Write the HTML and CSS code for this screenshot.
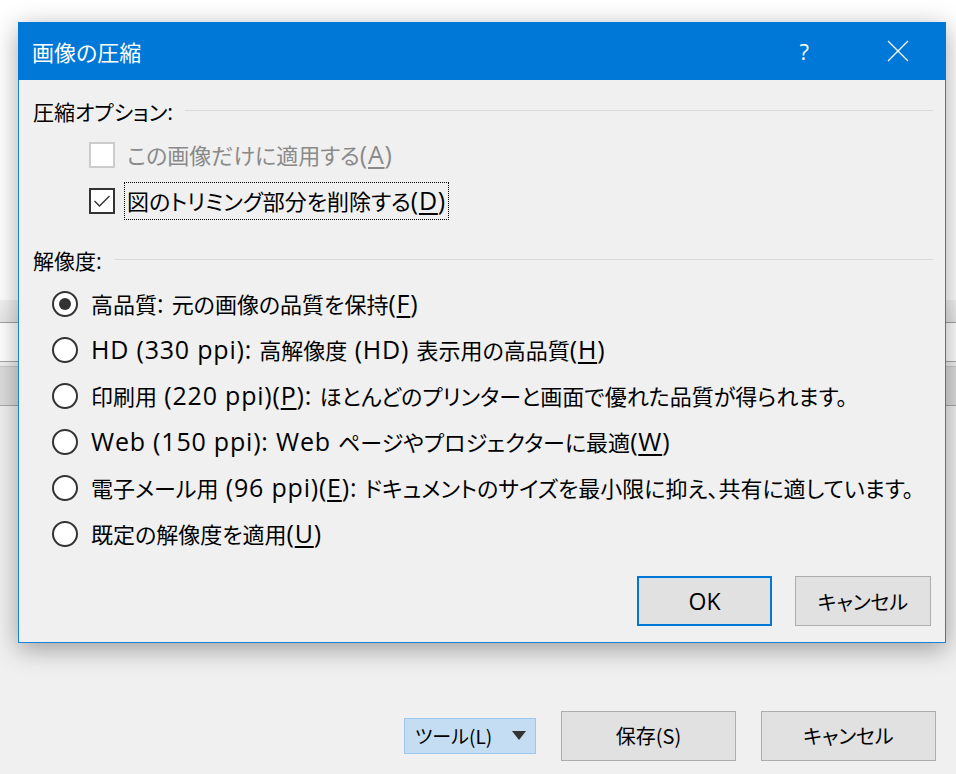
FILE: index.html
```html
<!DOCTYPE html>
<html lang="ja">

<head>
    <meta charset="UTF-8">
    <meta name="viewport" content="width=device-width, initial-scale=1.0">
    <title>画像の圧縮</title>
    <link rel="stylesheet" href="styles.css">
</head>

<body>
    <div class="screen">
        <!-- the save dialog behind -->
        <div class="behind">
            <div class="behind_top"></div>
            <div class="behind_band"></div>
            <div class="behind_field"></div>
            <div class="behind_gap"></div>
            <div class="behind_bar"></div>
            <div class="behind_bottom">
                <div class="tools_btn">ツール(L) <span class="tri"></span></div>
                <button class="win_btn wide">保存(S)</button>
                <button class="win_btn wide">キャンセル</button>
            </div>
        </div>

        <div class="dialog">
            <div class="title_bar">
                <span class="title">画像の圧縮</span>
                <span class="help">?</span>
                <svg class="close" width="22" height="22" viewBox="0 0 22 22">
                    <path d="M1 1 L21 21 M21 1 L1 21" stroke="#fff" stroke-width="1.3" fill="none" />
                </svg>
            </div>
            <div class="dialog_body">
                <div class="group_title"><span>圧縮オプション<span class="en">:</span></span><div class="rule"></div></div>
                <div class="check_row disabled">
                    <span class="checkbox"></span>
                    <span class="label">この画像だけに適用する<span class="en">(<u>A</u>)</span></span>
                </div>
                <div class="check_row">
                    <span class="checkbox checked">
                        <svg width="22" height="22" viewBox="0 0 22 22">
                            <path d="M3.5 11 L8.5 16 L18.5 6" stroke="#333" stroke-width="1.4" fill="none" />
                        </svg>
                    </span>
                    <span class="label focus">図のトリミング部分を削除する<span class="en">(<u>D</u>)</span></span>
                </div>

                <div class="group_title second"><span>解像度<span class="en">:</span></span><div class="rule"></div></div>
                <div class="radio_list">
                    <div class="radio_row"><span class="radio on"></span><span class="label">高品質<span class="en">: </span>元の画像の品質を保持<span class="en">(<u>F</u>)</span></span></div>
                    <div class="radio_row"><span class="radio"></span><span class="label"><span class="en">HD (330 ppi): </span>高解像度<span class="en"> (HD) </span>表示用の高品質<span class="en">(<u>H</u>)</span></span></div>
                    <div class="radio_row"><span class="radio"></span><span class="label">印刷用<span class="en"> (220 ppi)(<u>P</u>): </span>ほとんどのプリンターと画面で優れた品質が得られます。</span></div>
                    <div class="radio_row"><span class="radio"></span><span class="label"><span class="en">Web (150 ppi): Web </span>ページやプロジェクターに最適<span class="en">(<u>W</u>)</span></span></div>
                    <div class="radio_row"><span class="radio"></span><span class="label">電子メール用<span class="en"> (96 ppi)(<u>E</u>): </span>ドキュメントのサイズを最小限に抑え、共有に適しています。</span></div>
                    <div class="radio_row"><span class="radio"></span><span class="label">既定の解像度を適用<span class="en">(<u>U</u>)</span></span></div>
                </div>

                <div class="dialog_buttons">
                    <button class="win_btn default">OK</button>
                    <button class="win_btn">キャンセル</button>
                </div>
            </div>
        </div>
    </div>
</body>

</html>
```

FILE: styles.css
```css
body {
    margin: 0;
    background-color: #f0f0f0;
    font-family: "Open Sans", "Noto Sans CJK JP", sans-serif;
    font-feature-settings: "palt";
    color: #000;
}

.screen {
    width: 956px;
    height: 774px;
    position: relative;
    overflow: hidden;
}

.behind {
    display: flex;
    flex-direction: column;
    height: 100%;
}

.behind_top {
    height: 300px;
    background-color: #fff;
}

.behind_band {
    height: 22px;
    background: linear-gradient(#f3f3f3, #e6e6e6);
    border-bottom: 1px solid #a3a3a3;
}

.behind_field {
    height: 38px;
    background-color: #fff;
    border-bottom: 1px solid #a8a8a8;
}

.behind_gap {
    height: 4px;
    background-color: #f0f0f0;
    border-bottom: 1px solid #c8c8c8;
}

.behind_bar {
    height: 38px;
    background-color: #dcdcdc;
    border-bottom: 1px solid #a8a8a8;
}

.behind_bottom {
    flex: 1;
    display: flex;
    justify-content: flex-end;
    align-items: center;
    gap: 25px;
    padding: 291px 20px 0 0;
    box-sizing: border-box;
}

.tools_btn {
    width: 132px;
    height: 36px;
    box-sizing: border-box;
    background-color: #c4ddf3;
    border: 1px solid #99c9ef;
    font-family: "Noto Sans CJK JP", sans-serif;
    font-size: 19px;
    line-height: 33px;
    padding-left: 10px;
    display: flex;
    align-items: center;
    gap: 20px;
}

.tri {
    width: 0;
    height: 0;
    border-left: 7px solid transparent;
    border-right: 7px solid transparent;
    border-top: 9px solid #333;
}

.win_btn {
    font-family: "Noto Sans CJK JP", sans-serif;
    font-feature-settings: "palt";
    font-size: 20px;
    color: #000;
    background-color: #e1e1e1;
    border: 1px solid #adadad;
    height: 50px;
    width: 136px;
    padding: 0;
}

.win_btn.wide {
    width: 175px;
}

.win_btn.default {
    border: 2px solid #0078d7;
    width: 135px;
    font-family: "Open Sans", sans-serif;
    font-size: 23px;
}

/* compress dialog */
.dialog {
    position: absolute;
    left: 18px;
    top: 22px;
    width: 928px;
    height: 621px;
    box-sizing: border-box;
    border: 1px solid #1883d7;
    border-top: none;
    background-color: #f0f0f0;
    box-shadow: 0 6px 24px rgba(0, 0, 0, 0.35);
}

.title_bar {
    height: 58px;
    background-color: #0078d7;
    color: #fff;
    display: flex;
    align-items: center;
    padding-left: 14px;
    margin: 0 -1px;
}

.title {
    font-size: 22px;
    flex: 1;
}

.help {
    font-size: 22px;
    margin-right: 78px;
}

.close {
    margin-right: 37px;
}

.dialog_body {
    padding: 0 12px 0 14px;
    font-size: 22px;
}

.en {
    font-size: 25px;
    letter-spacing: 0.8px;
}

.group_title {
    height: 30px;
    line-height: 30px;
    margin-top: 16px;
    font-size: 21px;
    display: flex;
    align-items: center;
}

.group_title .en {
    font-size: 22px;
    letter-spacing: 0;
}

.group_title.second {
    margin-top: 21px;
}

.rule {
    flex: 1;
    height: 1px;
    background-color: #dadada;
    margin-left: 12px;
    margin-top: -2px;
}

.check_row {
    height: 46px;
    display: flex;
    align-items: center;
    margin-left: 56px;
}

.group_title + .check_row {
    margin-top: 6px;
}

.checkbox {
    width: 26px;
    height: 26px;
    box-sizing: border-box;
    border: 2px solid #333;
    background-color: #fff;
    margin-right: 12px;
    display: flex;
    align-items: center;
    justify-content: center;
}

.disabled .checkbox {
    border-color: #cccccc;
}

.disabled .label {
    color: #8a8a8a;
}

.label {
    line-height: 35px;
}

.label.focus {
    border: 1px dotted #000;
    padding: 0 2px;
    margin-left: -3px;
}

.radio_list {
    margin-top: 6px;
    margin-left: 19px;
}

.radio_row {
    height: 46px;
    display: flex;
    align-items: center;
}

.radio {
    width: 26px;
    height: 26px;
    box-sizing: border-box;
    border: 2px solid #333;
    border-radius: 50%;
    background-color: #fff;
    margin-right: 13px;
    display: flex;
    align-items: center;
    justify-content: center;
}

.radio.on::after {
    content: "";
    width: 12px;
    height: 12px;
    border-radius: 50%;
    background-color: #333;
}

.label u {
    text-underline-offset: 3px;
}

.dialog_buttons {
    display: flex;
    justify-content: flex-end;
    gap: 23px;
    margin-top: 19px;
    margin-right: 2px;
}
```
